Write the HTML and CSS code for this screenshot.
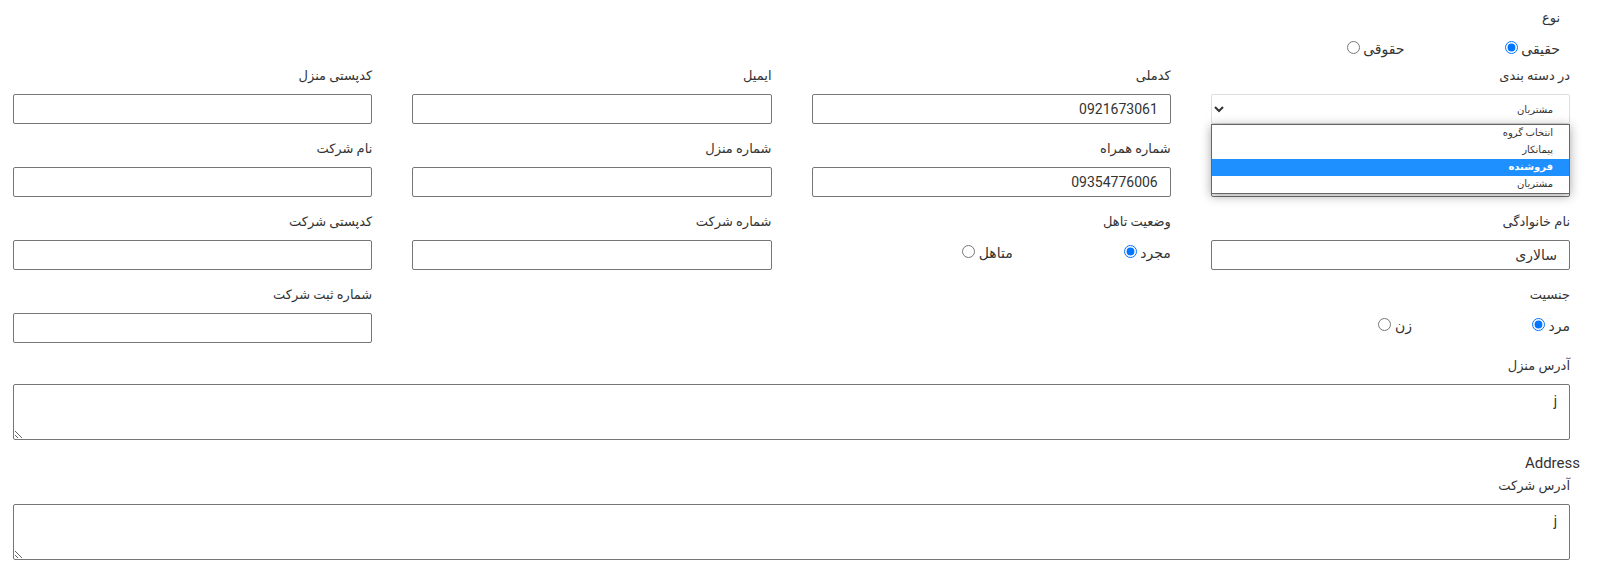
FILE: index.html
```html
<!DOCTYPE html>
<html lang="fa" dir="rtl">
<head>
<meta charset="utf-8">
<meta name="viewport" content="width=device-width, initial-scale=1">
<title>مشتریان</title>
<link rel="stylesheet" href="styles.css">
</head>
<body>
<form class="form">
  <fieldset class="type">
    <legend class="label">نوع</legend>
    <div class="radios">
      <label class="radio">حقیقی <input type="radio" name="type" checked></label>
      <label class="radio">حقوقی <input type="radio" name="type"></label>
    </div>
  </fieldset>

  <div class="grid">
    <div class="field">
      <label class="label" for="group">در دسته بندی</label>
      <div class="dropdown">
        <select class="control select" id="group">
          <option>انتخاب گروه</option>
          <option>پیمانکار</option>
          <option>فروشنده</option>
          <option selected>مشتریان</option>
        </select>
        <ul class="menu" role="listbox" aria-label="در دسته بندی">
          <li class="option" role="option">انتخاب گروه</li>
          <li class="option" role="option">پیمانکار</li>
          <li class="option option-active" role="option" aria-selected="true">فروشنده</li>
          <li class="option" role="option">مشتریان</li>
        </ul>
      </div>
    </div>
    <div class="field">
      <label class="label" for="national">کدملی</label>
      <input class="control" id="national" type="text" value="0921673061">
    </div>
    <div class="field">
      <label class="label" for="email">ایمیل</label>
      <input class="control" id="email" type="text">
    </div>
    <div class="field">
      <label class="label" for="home-zip">کدپستی منزل</label>
      <input class="control" id="home-zip" type="text">
    </div>

    <div class="field field-bottom">
      <input class="control" id="name" type="text" aria-label="نام">
    </div>
    <div class="field">
      <label class="label" for="mobile">شماره همراه</label>
      <input class="control" id="mobile" type="text" value="09354776006">
    </div>
    <div class="field">
      <label class="label" for="home-phone">شماره منزل</label>
      <input class="control" id="home-phone" type="text">
    </div>
    <div class="field">
      <label class="label" for="company">نام شرکت</label>
      <input class="control" id="company" type="text">
    </div>

    <div class="field">
      <label class="label" for="family">نام خانوادگی</label>
      <input class="control" id="family" type="text" value="سالاری">
    </div>
    <fieldset class="field">
      <legend class="label">وضعیت تاهل</legend>
      <div class="radios">
        <label class="radio">مجرد <input type="radio" name="marital" checked></label>
        <label class="radio">متاهل <input type="radio" name="marital"></label>
      </div>
    </fieldset>
    <div class="field">
      <label class="label" for="company-phone">شماره شرکت</label>
      <input class="control" id="company-phone" type="text">
    </div>
    <div class="field">
      <label class="label" for="company-zip">کدپستی شرکت</label>
      <input class="control" id="company-zip" type="text">
    </div>

    <fieldset class="field">
      <legend class="label">جنسیت</legend>
      <div class="radios">
        <label class="radio">مرد <input type="radio" name="gender" checked></label>
        <label class="radio">زن <input type="radio" name="gender"></label>
      </div>
    </fieldset>
    <div class="field field-last">
      <label class="label" for="reg">شماره ثبت شرکت</label>
      <input class="control" id="reg" type="text">
    </div>
  </div>

  <div class="field address">
    <label class="label" for="home-address">آدرس منزل</label>
    <textarea class="control area" id="home-address">j</textarea>
  </div>
  <div class="caption">Address</div>
  <div class="field">
    <label class="label" for="company-address">آدرس شرکت</label>
    <textarea class="control area" id="company-address">j</textarea>
  </div>
</form>
</body>
</html>
```
FILE: styles.css
```css
* {
  box-sizing: border-box;
}

body {
  margin: 0;
  background: #fff;
  color: #333;
  font-family: Roboto, "DejaVu Sans", sans-serif;
  font-size: 14px;
}

.form {
  padding: 6px 31px 12px 13px;
}

fieldset {
  min-width: 0;
  margin: 0;
  padding: 0;
  border: 0;
}

.type {
  width: 25%;
  padding-right: 10px;
  margin-bottom: 2px;
}

.label {
  display: block;
  height: 24px;
  margin-bottom: 6px;
  padding: 0;
  font-size: 13px;
  line-height: 24px;
}

.type .radios {
  grid-template-columns: 41% 41%;
}

.radios {
  display: grid;
  grid-template-columns: 44% 44%;
}

.radio {
  height: 26px;
  line-height: 26px;
}

.radio input {
  width: 13px;
  height: 13px;
  margin: 0;
}

.grid {
  display: grid;
  grid-template-columns: repeat(4, minmax(0, 1fr));
  gap: 13px 40px;
}

.field-bottom {
  align-self: end;
}

.field-last {
  grid-column: 4;
}

.control {
  display: block;
  width: 100%;
  height: 30px;
  margin: 0;
  padding: 0 12px;
  border: 1px solid #767676;
  border-radius: 2px;
  background: #fff;
  color: #333;
  font: inherit;
}

.dropdown {
  position: relative;
}

.select {
  padding: 0 12px 0 0;
  border-color: #ddd;
  font-size: 10px;
}

.menu {
  position: absolute;
  top: 100%;
  right: 0;
  left: 0;
  z-index: 1;
  margin: 0;
  padding: 0;
  border: 1px solid #666;
  background: #fff;
  box-shadow: 0 2px 10px rgba(0, 0, 0, 0.35);
  list-style: none;
}

.option {
  height: 17px;
  padding-right: 16px;
  font-size: 10px;
  line-height: 16px;
}

.option-active {
  background: #1e90ff;
  color: #fff;
  font-weight: bold;
}

.address {
  margin-top: 11px;
}

.area {
  height: 56px;
  padding: 5px 12px;
  line-height: 22px;
  resize: both;
}

.caption {
  margin: 12px -21px 0 0;
  padding-right: 11px;
  font-size: 15px;
  line-height: 22px;
}
```
